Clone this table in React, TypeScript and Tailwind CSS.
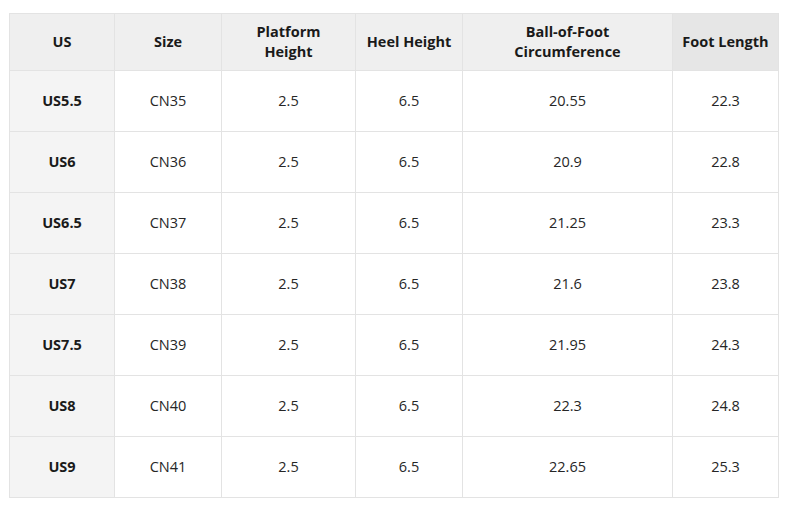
const headers = ["US", "Size", "Platform Height", "Heel Height", "Ball-of-Foot Circumference", "Foot Length"];

const rows = [
  ["US5.5", "CN35", "2.5", "6.5", "20.55", "22.3"],
  ["US6", "CN36", "2.5", "6.5", "20.9", "22.8"],
  ["US6.5", "CN37", "2.5", "6.5", "21.25", "23.3"],
  ["US7", "CN38", "2.5", "6.5", "21.6", "23.8"],
  ["US7.5", "CN39", "2.5", "6.5", "21.95", "24.3"],
  ["US8", "CN40", "2.5", "6.5", "22.3", "24.8"],
  ["US9", "CN41", "2.5", "6.5", "22.65", "25.3"],
];

const headerBreaks: Record<string, string[]> = {
  "Platform Height": ["Platform", "Height"],
  "Ball-of-Foot Circumference": ["Ball-of-Foot", "Circumference"],
};

export default function App() {
  return (
    <div className="w-[795px] h-[510px] bg-white pt-[13px] pl-[9px] font-['Open_Sans',sans-serif]">
      <div className="grid w-[770px] grid-cols-[105px_107px_134px_107px_210px_106px] border-t border-l border-[#e3e3e3]">
        {headers.map((h, i) => (
          <div
            key={h}
            className={`h-[57px] flex flex-col items-center justify-center border-r border-b border-[#e3e3e3] text-[14.5px] font-bold leading-[20px] text-[#1a1a1a] text-center ${
              i === 5 ? "bg-[#e6e6e6]" : "bg-[#efefef]"
            }`}
          >
            {(headerBreaks[h] ?? [h]).map((line) => (
              <span key={line}>{line}</span>
            ))}
          </div>
        ))}
        {rows.map((row) =>
          row.map((cell, i) => (
            <div
              key={row[0] + i}
              className={`h-[61px] flex items-center justify-center border-r border-b border-[#e3e3e3] text-[14.5px] ${
                i === 0 ? "bg-[#f4f4f4] font-bold text-[#1a1a1a]" : "bg-white text-[#262626]"
              }`}
            >
              {cell}
            </div>
          ))
        )}
      </div>
    </div>
  );
}
